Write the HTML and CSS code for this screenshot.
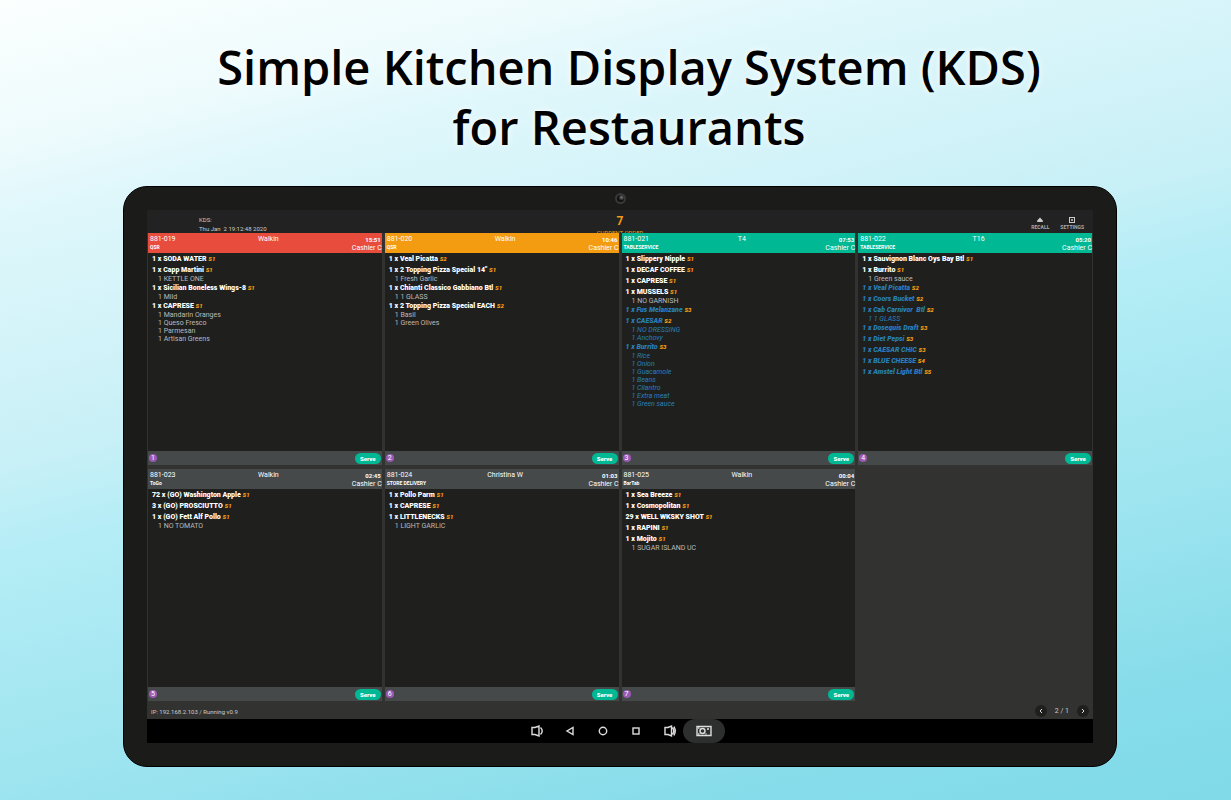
FILE: index.html
```html
<!DOCTYPE html>
<html lang="en">
<head>
    <meta charset="UTF-8">
    <title>Simple Kitchen Display System</title>
    <link rel="stylesheet" href="styles.css">
</head>
<body>
<h1>Simple Kitchen Display System (KDS)<br>for Restaurants</h1>
<div class="device">
    <div class="camera"></div>
    <div class="screen">
        <header class="topbar">
            <div class="info">KDS:<br>Thu Jan&nbsp; 2 19:12:48 2020</div>
            <div class="count"><b>7</b><span>CURRENT ORDER</span></div>
            <div class="tools">
                <button type="button">
                    <svg viewBox="0 0 6 6"><path d="M3 0.5L5.8 3.6H.2zM.2 3.600h5.6v1.400H.2z" fill="#ccc"/></svg>
                    RECALL
                </button>
                <button type="button">
                    <svg viewBox="0 0 6 6"><rect x=".5" y=".5" width="5" height="5" fill="none" stroke="#ccc"/><circle cx="3" cy="3" r="1" fill="#ccc"/></svg>
                    SETTINGS
                </button>
            </div>
        </header>
        <main class="orders">
            <section class="card red">
                <div class="head">
                    <div>881-019<b>QSR</b></div>
                    <div class="name">Walkin</div>
                    <div class="time"><b>15:51</b>Cashier C</div>
                </div>
                <ul class="list">
                    <li>1 x SODA WATER <em>S1</em></li>
                    <li>1 x Capp Martini <em>S1</em>
                        <ul><li>1 KETTLE ONE</li></ul>
                    </li>
                    <li>1 x Sicilian Boneless Wings-8 <em>S1</em>
                        <ul><li>1 Mild</li></ul>
                    </li>
                    <li>1 x CAPRESE <em>S1</em>
                        <ul><li>1 Mandarin Oranges</li><li>1 Queso Fresco</li><li>1 Parmesan</li><li>1 Artisan Greens</li></ul>
                    </li>
                </ul>
                <div class="foot"><i>1</i><button type="button">Serve</button></div>
            </section>
            <section class="card orange">
                <div class="head">
                    <div>881-020<b>QSR</b></div>
                    <div class="name">Walkin</div>
                    <div class="time"><b>10:46</b>Cashier C</div>
                </div>
                <ul class="list">
                    <li>1 x Veal Picatta <em>S2</em></li>
                    <li>1 x 2 Topping Pizza Special 14" <em>S1</em>
                        <ul><li>1 Fresh Garlic</li></ul>
                    </li>
                    <li>1 x Chianti Classico Gabbiano Btl <em>S1</em>
                        <ul><li>1 1 GLASS</li></ul>
                    </li>
                    <li>1 x 2 Topping Pizza Special EACH <em>S2</em>
                        <ul><li>1 Basil</li><li>1 Green Olives</li></ul>
                    </li>
                </ul>
                <div class="foot"><i>2</i><button type="button">Serve</button></div>
            </section>
            <section class="card green">
                <div class="head">
                    <div>881-021<b>TABLESERVICE</b></div>
                    <div class="name">T4</div>
                    <div class="time"><b>07:53</b>Cashier C</div>
                </div>
                <ul class="list">
                    <li>1 x Slippery Nipple <em>S1</em></li>
                    <li>1 x DECAF COFFEE <em>S1</em></li>
                    <li>1 x CAPRESE <em>S1</em></li>
                    <li>1 x MUSSELS <em>S1</em>
                        <ul><li>1 NO GARNISH</li></ul>
                    </li>
                    <li class="other">1 x Fus Melanzane <em>S3</em></li>
                    <li class="other">1 x CAESAR <em>S2</em>
                        <ul><li>1 NO DRESSING</li><li>1 Anchovy</li></ul>
                    </li>
                    <li class="other">1 x Burrito <em>S3</em>
                        <ul><li>1 Rice</li><li>1 Onion</li><li>1 Guacamole</li><li>1 Beans</li><li>1 Cilantro</li><li>1 Extra meat</li><li>1 Green sauce</li></ul>
                    </li>
                </ul>
                <div class="foot"><i>3</i><button type="button">Serve</button></div>
            </section>
            <section class="card green">
                <div class="head">
                    <div>881-022<b>TABLESERVICE</b></div>
                    <div class="name">T16</div>
                    <div class="time"><b>05:20</b>Cashier C</div>
                </div>
                <ul class="list">
                    <li>1 x Sauvignon Blanc Oys Bay Btl <em>S1</em></li>
                    <li>1 x Burrito <em>S1</em>
                        <ul><li>1 Green sauce</li></ul>
                    </li>
                    <li class="other">1 x Veal Picatta <em>S2</em></li>
                    <li class="other">1 x Coors Bucket <em>S2</em></li>
                    <li class="other">1 x Cab Carnivor&nbsp; Btl <em>S2</em>
                        <ul><li>1 1 GLASS</li></ul>
                    </li>
                    <li class="other">1 x Dosequis Draft <em>S3</em></li>
                    <li class="other">1 x Diet Pepsi <em>S3</em></li>
                    <li class="other">1 x CAESAR CHIC <em>S3</em></li>
                    <li class="other">1 x BLUE CHEESE <em>S4</em></li>
                    <li class="other">1 x Amstel Light Btl <em>S5</em></li>
                </ul>
                <div class="foot"><i>4</i><button type="button">Serve</button></div>
            </section>
            <section class="card">
                <div class="head">
                    <div>881-023<b>ToGo</b></div>
                    <div class="name">Walkin</div>
                    <div class="time"><b>02:45</b>Cashier C</div>
                </div>
                <ul class="list">
                    <li>72 x (GO) Washington Apple <em>S1</em></li>
                    <li>3 x (GO) PROSCIUTTO <em>S1</em></li>
                    <li>1 x (GO) Fett Alf Pollo <em>S1</em>
                        <ul><li>1 NO TOMATO</li></ul>
                    </li>
                </ul>
                <div class="foot"><i>5</i><button type="button">Serve</button></div>
            </section>
            <section class="card">
                <div class="head">
                    <div>881-024<b>STORE DELIVERY</b></div>
                    <div class="name">Christina W</div>
                    <div class="time"><b>01:03</b>Cashier C</div>
                </div>
                <ul class="list">
                    <li>1 x Pollo Parm <em>S1</em></li>
                    <li>1 x CAPRESE <em>S1</em></li>
                    <li>1 x LITTLENECKS <em>S1</em>
                        <ul><li>1 LIGHT GARLIC</li></ul>
                    </li>
                </ul>
                <div class="foot"><i>6</i><button type="button">Serve</button></div>
            </section>
            <section class="card">
                <div class="head">
                    <div>881-025<b>BarTab</b></div>
                    <div class="name">Walkin</div>
                    <div class="time"><b>00:04</b>Cashier C</div>
                </div>
                <ul class="list">
                    <li>1 x Sea Breeze <em>S1</em></li>
                    <li>1 x Cosmopolitan <em>S1</em></li>
                    <li>29 x WELL WKSKY SHOT <em>S1</em></li>
                    <li>1 x RAPINI <em>S1</em></li>
                    <li>1 x Mojito <em>S1</em>
                        <ul><li>1 SUGAR ISLAND UC</li></ul>
                    </li>
                </ul>
                <div class="foot"><i>7</i><button type="button">Serve</button></div>
            </section>
        </main>
        <footer class="status">
            <span>IP: 192.168.2.103 / Running v0.9</span>
            <div class="pager">
                <button type="button" aria-label="Previous page"><svg viewBox="0 0 12 12"><path d="M7 4L5 6l2 2"/></svg></button>
                <span>2 / 1</span>
                <button type="button" aria-label="Next page"><svg viewBox="0 0 12 12"><path d="M5 4l2 2-2 2"/></svg></button>
            </div>
        </footer>
        <nav class="nav">
            <button type="button" aria-label="Volume down"><svg viewBox="0 0 14 14"><path d="M2 3.500h3l4-1.500v10l-4-1.500H2zM10.500 3.500q3.500 3.500 0 7"/></svg></button>
            <button type="button" aria-label="Back"><svg viewBox="0 0 14 14"><path d="M10 3.5v7L4 7z"/></svg></button>
            <button type="button" aria-label="Home"><svg viewBox="0 0 14 14"><circle cx="7" cy="7" r="3.7"/></svg></button>
            <button type="button" aria-label="Recent"><svg viewBox="0 0 14 14"><rect x="4" y="4" width="6" height="6"/></svg></button>
            <button type="button" aria-label="Volume up"><svg viewBox="0 0 14 14"><path d="M3 3.500h3l3.500-1.500v10l-3.500-1.500H3zM10.500 3.500q2.500 3.500 0 7M12 2.500q2.500 4.500 0 9"/></svg></button>
            <button type="button" aria-label="Screenshot" class="shot"><svg viewBox="0 0 18 14"><path d="M2 2.500h14v9H2zM12 5h2"/><circle cx="7.500" cy="7" r="2.500"/><path d="M3 4h1.500M3 10h1.500M10.500 10h1"/></svg></button>
        </nav>
    </div>
</div>
</body>
</html>
```
FILE: styles.css
```css
*{
    margin: 0;
    padding: 0;
    box-sizing: border-box;
    list-style: none;
}
body{
    min-height: 100vh;
    padding: 37px 114px 33px 123px;
    background: linear-gradient(166deg, #fbfffe 0%, #eefbfd 13%, #dff7fb 20%, #c8f0f7 42%, #b5edf6 50%, #9ce4ef 72%, #86dcea 89%, #80dae8 100%);
    font-family: Roboto, "Liberation Sans", sans-serif;
}
button{
    border: 0;
    background: none;
    color: inherit;
    font-family: inherit;
    cursor: pointer;
}
svg{
    display: block;
}
h1{
    padding-left: 18px;
    font: 600 47px/60px "Open Sans", sans-serif;
    text-align: center;
    color: #000;
    white-space: nowrap;
    text-shadow: 0 0 6px #fff;
}
.device{
    margin-top: 29px;
    padding: 6px 23px 23px;
    border: 1px solid #000;
    border-radius: 24px;
    background: #1b1b19;
}
.camera{
    width: 11px;
    height: 11px;
    margin: 0 auto 6px;
    border: 2px solid #383838;
    border-radius: 50%;
    background: radial-gradient(circle at 65% 35%, #777 0, #111 50%);
}
.screen{
    background: #323231;
    color: #ddd;
    font-size: 7px;
}
.topbar{
    display: grid;
    grid-template-columns: 1fr auto 1fr;
    height: 23px;
    background: #222;
}
.info{
    padding: 5px 0 0 52px;
    font-size: 6px;
    line-height: 9px;
    color: #ccc;
}
.count{
    padding-top: 4px;
    text-align: center;
    color: #f39c12;
}
.count b{
    display: block;
    font-size: 12px;
    line-height: 14px;
}
/* the cards below cover the lower half of this line */
.count span{
    display: block;
    font-size: 6px;
    line-height: 9px;
}
.tools{
    display: flex;
    justify-content: flex-end;
    gap: 11px;
    padding: 7px 9px 0 0;
}
.tools button{
    display: flex;
    flex-direction: column;
    align-items: center;
    font-size: 5px;
    font-weight: bold;
    line-height: 8px;
    color: #aaa;
}
.tools svg{
    width: 6px;
    height: 6px;
}
.orders{
    position: relative;
    display: grid;
    grid-template-columns: repeat(4, 1fr);
    grid-auto-rows: minmax(232px, auto);
    gap: 4px 3px;
    padding: 0 1px;
    background: #323231;
}
.card{
    display: flex;
    flex-direction: column;
    background: #1f1f1e;
}
.head{
    display: grid;
    grid-template-columns: 1fr auto 1fr;
    height: 20px;
    padding: 2px 0 0 2px;
    background: #45494a;
    line-height: 9px;
    color: #fff;
}
.head b{
    display: block;
}
.head div:first-child b{
    font-size: 5px;
    line-height: 6px;
}
.head .name{
    padding-left: 5px;
}
.time{
    text-align: right;
}
.time b{
    padding-right: 1px;
    font-size: 6px;
}
.red .head{
    background: #e74c3c;
}
.orange .head{
    background: #f39c12;
}
.green .head{
    background: #00b894;
}
.list{
    flex: 1;
    padding: 1px 0 0 4px;
    font-weight: 900;
    line-height: 11px;
    color: #fff;
}
.list em{
    font-size: 6px;
    line-height: 1px;
    color: #f39c12;
}
.list ul{
    margin-top: -1px;
    padding-left: 6px;
    font-weight: normal;
    line-height: 8px;
    color: #bbb;
}
.list .other, .other ul{
    font-style: italic;
    color: #2980b9;
}
.foot{
    display: flex;
    justify-content: space-between;
    align-items: center;
    height: 14px;
    padding: 0 1px;
    background: #45494a;
}
.foot i{
    width: 8px;
    height: 8px;
    border-radius: 50%;
    background: #9b59b6;
    color: #fff;
    font-style: normal;
    line-height: 8px;
    text-align: center;
}
.foot button{
    width: 26px;
    height: 11px;
    border-radius: 6px;
    background: #00b894;
    color: #fff;
    font-size: 6px;
    font-weight: 900;
    line-height: 11px;
}
.status{
    display: flex;
    justify-content: space-between;
    align-items: center;
    height: 18px;
    padding: 2px 4px 0;
    font-size: 6px;
    color: #ccc;
}
.pager{
    display: flex;
    align-items: center;
    gap: 8px;
    font-size: 7px;
}
.pager button{
    width: 12px;
    height: 12px;
    border-radius: 50%;
    background: #1f1f1e;
}
.pager path{
    fill: none;
    stroke: #ddd;
}
.nav{
    display: flex;
    justify-content: center;
    align-items: center;
    gap: 19px;
    height: 24px;
    padding-left: 15px;
    background: #000;
}
.nav svg{
    width: 14px;
    height: 14px;
    fill: none;
    stroke: #ddd;
    stroke-width: 1.4;
}
.nav .shot{
    margin-left: -12px;
    padding: 5px 12px;
    border-radius: 12px;
    background: #2d2f2f;
}
.nav .shot svg{
    width: 18px;
}
```
